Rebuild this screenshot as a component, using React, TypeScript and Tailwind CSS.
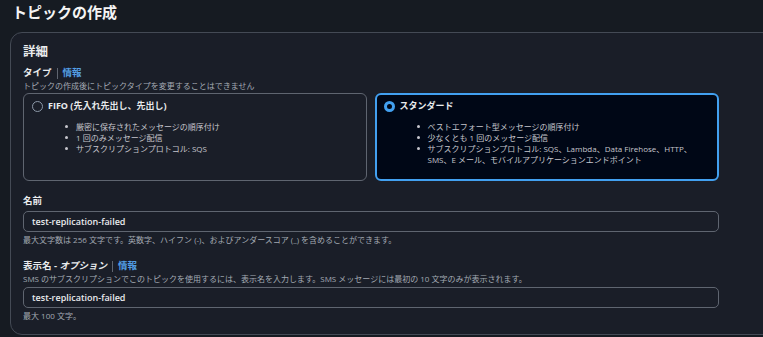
import React from 'react';

const font = { fontFamily: '"Open Sans", "Noto Sans CJK JP", sans-serif' };

const Label = ({ children, info }: { children: React.ReactNode; info?: boolean }) => (
  <div className="flex items-center h-[14px] text-[9.5px] font-bold text-[#e9ebed]">
    <span>{children}</span>
    {info && (
      <>
        <span className="mx-[5px] h-[11px] w-px bg-[#5f6570]" />
        <span className="text-[#539fe5] font-bold">情報</span>
      </>
    )}
  </div>
);

const Radio = ({ checked }: { checked?: boolean }) =>
  checked ? (
    <span className="w-[11px] h-[11px] rounded-full border-[3px] border-[#42a0f0] bg-[#000716] shrink-0" />
  ) : (
    <span className="w-[11px] h-[11px] rounded-full border border-[#8d99a8] shrink-0" />
  );

const Card = ({ title, items, checked }: { title: string; items: string[][]; checked?: boolean }) => (
  <div
    className={`flex-1 h-[88px] rounded-[6px] ${
      checked ? 'border-2 border-[#42a0f0] bg-[#000716] pl-[7px] pt-[5px]' : 'border border-[#5f6570] pl-[8px] pt-[6px]'
    }`}
  >
    <div className="flex items-center gap-[5px] h-[12px]">
      <Radio checked={checked} />
      <span className="text-[9px] font-bold text-[#e9ebed]">{title}</span>
    </div>
    <ul className="mt-[9px] pl-[44px] text-[8px] leading-[11px] text-[#c6c6cd]">
      {items.map((lines, i) => (
        <li key={i} className="relative">
          <span className="absolute left-[-11px] top-[4px] w-[3px] h-[3px] rounded-full bg-[#c6c6cd]" />
          {lines.map((l, j) => (
            <div key={j}>{l}</div>
          ))}
        </li>
      ))}
    </ul>
  </div>
);

const Input = ({ value }: { value: string }) => (
  <div className="h-[21px] w-[696px] rounded-[5px] border border-[#5f6570] flex items-center pl-[8px] text-[9px] font-semibold text-[#e9ebed]">
    {value}
  </div>
);

export default function App() {
  return (
    <div className="w-[763px] h-[337px] overflow-hidden bg-[#161b22]" style={font}>
      <h1 className="h-[32px] pl-[12px] pt-[1px] text-[15px] leading-[22px] font-bold text-[#f4f4f4]">
        トピックの作成
      </h1>
      <div className="ml-[10px] w-[800px] h-[303px] rounded-[12px] border border-[#444a55] bg-[#1a1e28] pl-[12px]">
        <h2 className="mt-[11px] h-[15px] text-[12.5px] leading-[15px] font-bold text-[#e9ebed]">詳細</h2>
        <div className="mt-[7px]">
          <Label info>タイプ</Label>
        </div>
        <div className="h-[12px] text-[8px] leading-[12px] text-[#a3aab3]">
          トピックの作成後にトピックタイプを変更することはできません
        </div>
        <div className="mt-[1px] flex gap-[8px] w-[696px]">
          <Card
            title="FIFO (先入れ先出し、先出し)"
            items={[
              ['厳密に保存されたメッセージの順序付け'],
              ['1 回のみメッセージ配信'],
              ['サブスクリプションプロトコル: SQS'],
            ]}
          />
          <Card
            checked
            title="スタンダード"
            items={[
              ['ベストエフォート型メッセージの順序付け'],
              ['少なくとも 1 回のメッセージ配信'],
              [
                'サブスクリプションプロトコル: SQS、Lambda、Data Firehose、HTTP、',
                'SMS、E メール、モバイルアプリケーションエンドポイント',
              ],
            ]}
          />
        </div>
        <div className="mt-[13px]">
          <Label>名前</Label>
        </div>
        <div className="mt-[3px]">
          <Input value="test-replication-failed" />
        </div>
        <div className="mt-[2px] h-[12px] text-[8px] leading-[12px] text-[#a3aab3]">
          最大文字数は 256 文字です。英数字、ハイフン (-)、およびアンダースコア (_) を含めることができます。
        </div>
        <div className="mt-[13px]">
          <Label info>
            表示名 - <span className="italic">オプション</span>
          </Label>
        </div>
        <div className="h-[12px] text-[8px] leading-[12px] text-[#a3aab3]">
          SMS のサブスクリプションでこのトピックを使用するには、表示名を入力します。SMS メッセージには最初の 10 文字のみが表示されます。
        </div>
        <div className="mt-[2px]">
          <Input value="test-replication-failed" />
        </div>
        <div className="mt-[2px] h-[12px] text-[8px] leading-[12px] text-[#a3aab3]">最大 100 文字。</div>
      </div>
    </div>
  );
}
